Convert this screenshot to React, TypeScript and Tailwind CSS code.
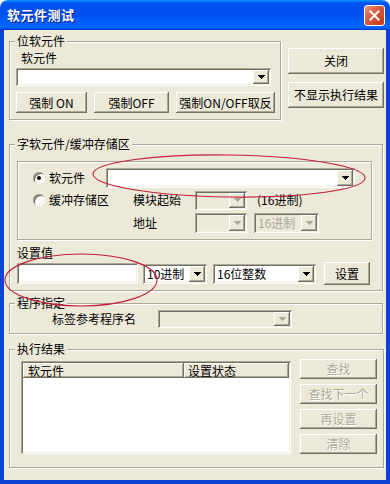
import type { ReactNode } from 'react'

const raised = 'bg-[#ECE9D8] shadow-[inset_-1px_-1px_0_#716F64,inset_1px_1px_0_#FFFFFF,inset_-2px_-2px_0_#ACA899]'
const sunken = 'shadow-[inset_1px_1px_0_#ACA899,inset_-1px_-1px_0_#FFFFFF,inset_2px_2px_0_#716F64,inset_-2px_-2px_0_#F1EFE2]'
const etched = 'border border-[#ACA899] shadow-[inset_1px_1px_0_#FFFFFF,1px_1px_0_#FFFFFF]'
const txt = 'text-[12px] leading-[14px] whitespace-nowrap'

function Button({ label, className = '', disabled = false }: { label: string; className?: string; disabled?: boolean }) {
  return (
    <div
      className={`${raised} ${txt} flex items-center justify-center shrink-0 ${
        disabled ? 'text-[#ACA899] [text-shadow:1px_1px_0_#FFFFFF]' : 'text-black'
      } ${className}`}
    >
      {label}
    </div>
  )
}

function Arrow({ disabled = false }: { disabled?: boolean }) {
  const c = disabled ? '#ACA899' : '#000000'
  return (
    <svg width="7" height="4" viewBox="0 0 7 4" shapeRendering="crispEdges">
      <rect x="0" y="0" width="7" height="1" fill={c} />
      <rect x="1" y="1" width="5" height="1" fill={c} />
      <rect x="2" y="2" width="3" height="1" fill={c} />
      <rect x="3" y="3" width="1" height="1" fill={c} />
    </svg>
  )
}

function Combo({ className = '', text = '', disabled = false }: { className?: string; text?: string; disabled?: boolean }) {
  return (
    <div className={`${sunken} ${disabled ? 'bg-[#ECE9D8]' : 'bg-white'} flex items-stretch p-[2px] shrink-0 ${className}`}>
      <div className={`flex-1 flex items-center pl-[2px] ${txt} ${disabled ? 'text-[#ACA899]' : 'text-black'}`}>{text}</div>
      <div className={`${raised} w-[16px] flex items-center justify-center`}>
        <Arrow disabled={disabled} />
      </div>
    </div>
  )
}

function Group({ label, className = '', children }: { label: string; className?: string; children?: ReactNode }) {
  return (
    <div className={`relative ${etched} ${className}`}>
      <span className={`absolute left-[5px] top-[-8px] bg-[#ECE9D8] px-[2px] ${txt}`}>{label}</span>
      {children}
    </div>
  )
}

function Radio({ checked = false }: { checked?: boolean }) {
  return (
    <span className="w-[12px] h-[12px] rounded-full bg-white shrink-0 flex items-center justify-center shadow-[inset_1px_1px_0_#ACA899,inset_-1px_-1px_0_#FFFFFF,inset_2px_2px_0_#716F64,inset_-2px_-2px_0_#F1EFE2]">
      {checked && <span className="w-[4px] h-[4px] rounded-full bg-black" />}
    </span>
  )
}

export default function App() {
  return (
    <div className="relative w-[390px] h-[484px] flex flex-col rounded-t-[8px] overflow-hidden font-['Noto_Sans_CJK_SC','Noto_Sans',sans-serif] text-black">
      {/* title bar */}
      <div className="h-[30px] shrink-0 flex items-center justify-between pl-[7px] pr-[5px] bg-[linear-gradient(180deg,#0997FF_0%,#0053EE_10%,#0050EE_45%,#0066FF_88%,#0060F8_94%,#003DD7_97%,#003DD7_100%)]">
        <span className="text-white font-bold text-[13px] leading-[16px] tracking-[0.5px] [text-shadow:1px_1px_0_#0A1883]">软元件测试</span>
        <div className="w-[21px] h-[21px] rounded-[3px] border border-white bg-[linear-gradient(135deg,#E99A80_0%,#D9573A_45%,#C13A1A_100%)] flex items-center justify-center">
          <svg width="11" height="11" viewBox="0 0 11 11">
            <path d="M1.5 1.5L9.5 9.5M9.5 1.5L1.5 9.5" stroke="#FFFFFF" strokeWidth="2" strokeLinecap="square" />
          </svg>
        </div>
      </div>

      {/* body */}
      <div className="flex-1 bg-[#ECE9D8] border-x-4 border-b-4 border-[#0B44D3] flex flex-col">
        {/* top row */}
        <div className="flex items-start pt-[11px] pl-[5px]">
          <Group label="位软元件" className="w-[272px] h-[79px] shrink-0">
            <div className="flex flex-col pl-[6px] pt-[9px]">
              <span className={`${txt} ml-[5px]`}>软元件</span>
              <div className="mt-[3px] flex items-center">
                <Combo className="w-[255px] h-[18px]" />
              </div>
              <div className="mt-[6px] flex gap-[7px]">
                <Button label="强制 ON" className="w-[71px] h-[21px]" />
                <Button label="强制OFF" className="w-[75px] h-[21px]" />
                <Button label="强制ON/OFF取反" className="w-[99px] h-[21px]" />
              </div>
            </div>
          </Group>
          <div className="ml-[7px] mt-[7px] flex flex-col gap-[8px]">
            <Button label="关闭" className="w-[96px] h-[26px]" />
            <Button label="不显示执行结果" className="w-[96px] h-[26px]" />
          </div>
        </div>

        {/* word device / buffer memory */}
        <Group label="字软元件/缓冲存储区" className="ml-[5px] mt-[24px] w-[374px] h-[147px] shrink-0">
          <div className={`ml-[7px] mt-[16px] w-[355px] h-[79px] ${etched} flex flex-col`}>
            <div className="mt-[6px] h-[20px] flex items-center pl-[15px]">
              <div className="w-[73px] flex items-center gap-[4px]">
                <Radio checked />
                <span className={txt}>软元件</span>
              </div>
              <Combo className="w-[249px] h-[20px]" />
            </div>
            <div className="mt-[2px] h-[20px] flex items-center pl-[15px]">
              <div className="w-[100px] flex items-center gap-[4px]">
                <Radio />
                <span className={txt}>缓冲存储区</span>
              </div>
              <span className={`${txt} w-[62px]`}>模块起始</span>
              <Combo className="w-[52px] h-[19px]" disabled />
              <span className={`${txt} ml-[10px]`}>(16进制)</span>
            </div>
            <div className="mt-[3px] h-[20px] flex items-center pl-[115px]">
              <span className={`${txt} w-[62px]`}>地址</span>
              <Combo className="w-[52px] h-[20px]" disabled />
              <Combo className="ml-[7px] w-[65px] h-[20px]" text="16进制" disabled />
            </div>
          </div>
          <span className={`block ${txt} ml-[7px] mt-[6px]`}>设置值</span>
          <div className="mt-[2px] h-[23px] flex items-center ml-[7px]">
            <div className={`${sunken} bg-white w-[121px] h-[21px] shrink-0`} />
            <Combo className="ml-[5px] w-[64px] h-[20px]" text="10进制" />
            <Combo className="ml-[6px] w-[103px] h-[20px]" text="16位整数" />
            <Button label="设置" className="ml-[8px] w-[46px] h-[23px]" />
          </div>
        </Group>

        {/* program */}
        <Group label="程序指定" className="ml-[5px] mt-[12px] w-[374px] h-[31px] shrink-0">
          <div className="mt-[6px] h-[18px] flex items-center pl-[42px]">
            <span className={`${txt} w-[106px]`}>标签参考程序名</span>
            <Combo className="w-[134px] h-[18px]" disabled />
          </div>
        </Group>

        {/* result */}
        <Group label="执行结果" className="ml-[5px] mt-[15px] w-[375px] h-[119px] shrink-0">
          <div className="flex items-start">
            <div className={`${sunken} bg-white ml-[11px] mt-[11px] w-[270px] h-[93px] p-[2px] shrink-0`}>
              <div className="flex h-[15px]">
                <div className={`${raised} ${txt} w-[161px] pl-[5px] flex items-center`}>软元件</div>
                <div className={`${raised} ${txt} flex-1 pl-[4px] flex items-center`}>设置状态</div>
              </div>
            </div>
            <div className="ml-[9px] mt-[9px] flex flex-col gap-[5px]">
              <Button label="查找" className="w-[77px] h-[20px]" disabled />
              <Button label="查找下一个" className="w-[77px] h-[20px]" disabled />
              <Button label="再设置" className="w-[77px] h-[20px]" disabled />
              <Button label="清除" className="w-[77px] h-[20px]" disabled />
            </div>
          </div>
        </Group>
      </div>

      {/* red annotation marks */}
      <svg className="absolute inset-0 pointer-events-none" width="390" height="484" viewBox="0 0 390 484">
        <ellipse cx="229" cy="176" rx="136" ry="21" fill="none" stroke="#C41E3A" strokeWidth="1.1" transform="rotate(0.8 229 176)" />
        <ellipse cx="81" cy="280" rx="76" ry="26" fill="none" stroke="#C41E3A" strokeWidth="1.1" />
      </svg>
    </div>
  )
}
